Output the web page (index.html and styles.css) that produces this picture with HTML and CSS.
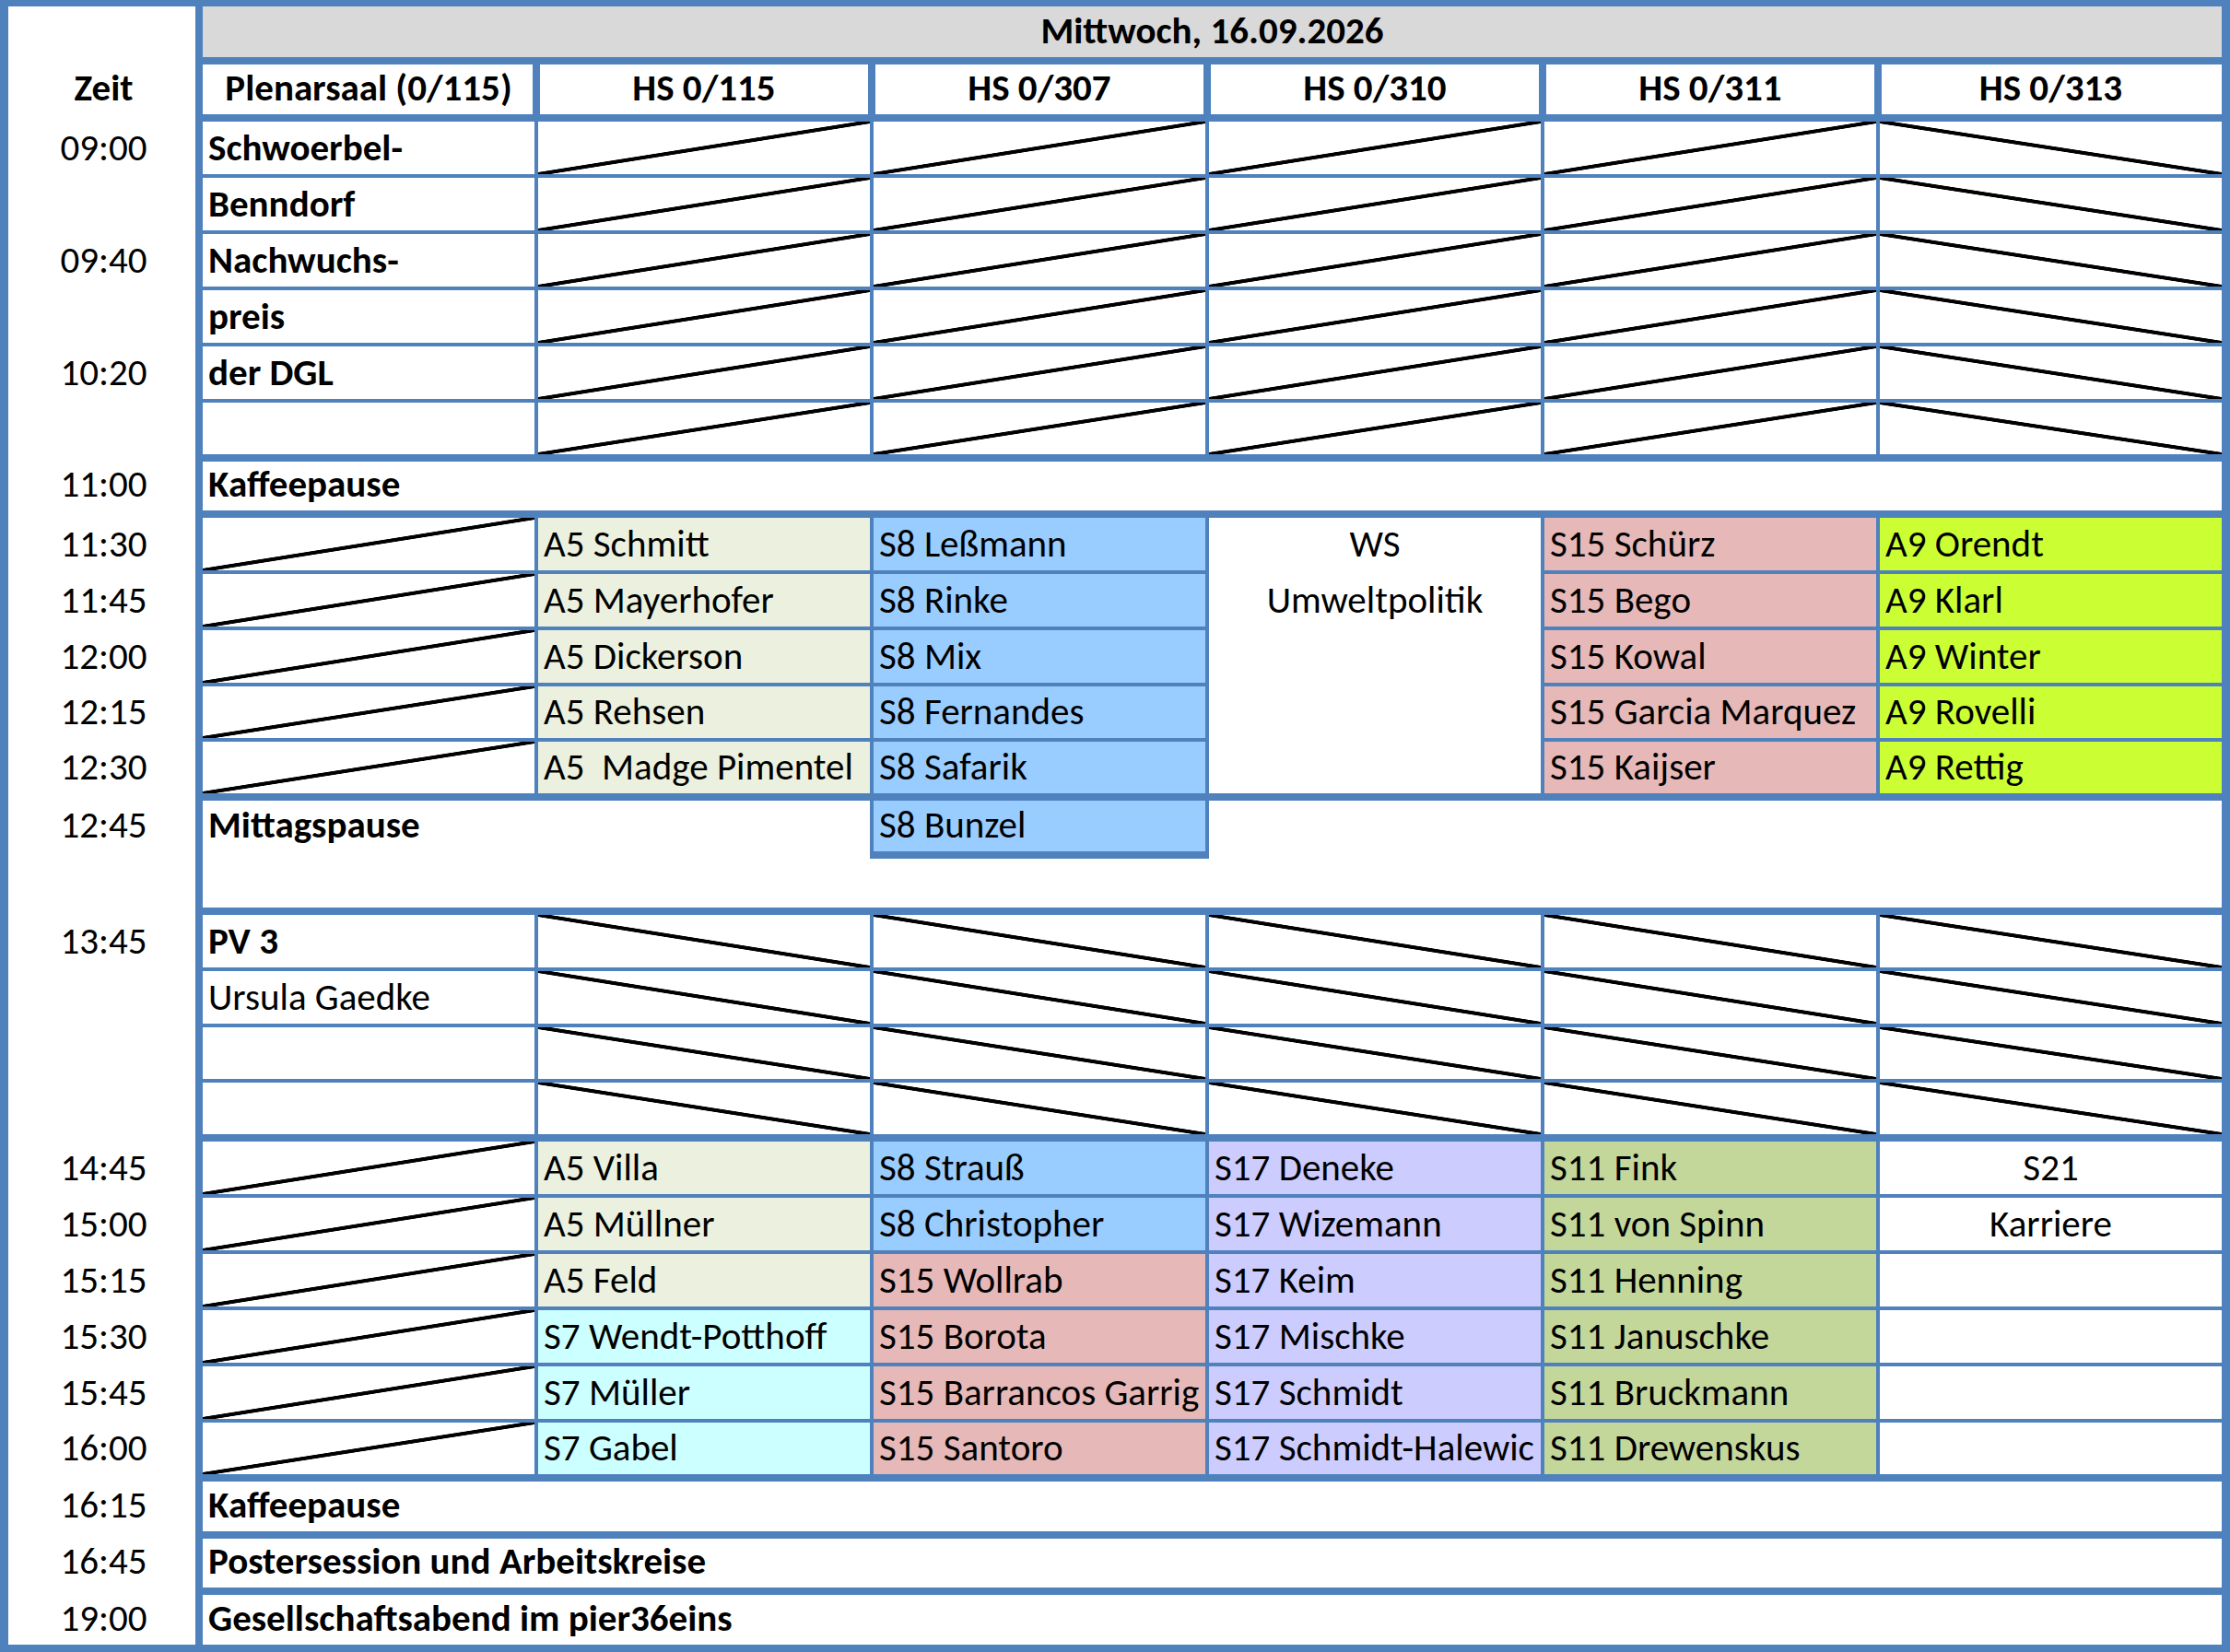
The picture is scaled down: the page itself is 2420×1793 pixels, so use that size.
FILE: index.html
```html
<!DOCTYPE html>
<html lang="de">
<head>
<meta charset="utf-8">
<title>Mittwoch, 16.09.2026</title>
<link rel="stylesheet" href="styles.css">
</head>
<body>
<div class="sheet">
  <div class="timecol">
    <div class="tband h-title"><div class="t"></div></div>
    <div class="tband h-head"><div class="t b">Zeit</div></div>
    <div class="tband rows6"><div class="t">09:00</div><div class="t"></div><div class="t">09:40</div><div class="t"></div><div class="t">10:20</div><div class="t"></div></div>
    <div class="tband h53"><div class="t">11:00</div></div>
    <div class="tband rows5"><div class="t">11:30</div><div class="t">11:45</div><div class="t">12:00</div><div class="t">12:15</div><div class="t">12:30</div></div>
    <div class="tband rowsm"><div class="t">12:45</div><div class="t"></div></div>
    <div class="tband rows4"><div class="t">13:45</div><div class="t"></div><div class="t"></div><div class="t"></div></div>
    <div class="tband rows6"><div class="t">14:45</div><div class="t">15:00</div><div class="t">15:15</div><div class="t">15:30</div><div class="t">15:45</div><div class="t">16:00</div></div>
    <div class="tband h54"><div class="t">16:15</div></div>
    <div class="tband h53"><div class="t">16:45</div></div>
    <div class="tband h54"><div class="t">19:00</div></div>
  </div>

  <div class="main">
    <div class="cell title b ctr">Mittwoch, 16.09.2026</div>

    <div class="band h-head">
      <div class="cell hd b ctr">Plenarsaal (0/115)</div>
      <div class="cell hd b ctr">HS 0/115</div>
      <div class="cell hd b ctr">HS 0/307</div>
      <div class="cell hd b ctr">HS 0/310</div>
      <div class="cell hd b ctr">HS 0/311</div>
      <div class="cell hd b ctr">HS 0/313</div>
    </div>

    <div class="band rows6">
      <div class="cell b">Schwoerbel-</div><div class="up"></div><div class="up"></div><div class="up"></div><div class="up"></div><div class="dn"></div>
      <div class="cell b">Benndorf</div><div class="up"></div><div class="up"></div><div class="up"></div><div class="up"></div><div class="dn"></div>
      <div class="cell b">Nachwuchs-</div><div class="up"></div><div class="up"></div><div class="up"></div><div class="up"></div><div class="dn"></div>
      <div class="cell b">preis</div><div class="up"></div><div class="up"></div><div class="up"></div><div class="up"></div><div class="dn"></div>
      <div class="cell b">der DGL</div><div class="up"></div><div class="up"></div><div class="up"></div><div class="up"></div><div class="dn"></div>
      <div class="cell"></div><div class="up"></div><div class="up"></div><div class="up"></div><div class="up"></div><div class="dn"></div>
    </div>

    <div class="cell b h53">Kaffeepause</div>

    <div class="band rows5">
      <div class="up"></div><div class="cell a5">A5 Schmitt</div><div class="cell s8">S8 Leßmann</div>
      <div class="ws"><div class="cell ctr">WS</div><div class="cell ctr">Umweltpolitik</div></div>
      <div class="cell s15">S15 Schürz</div><div class="cell a9">A9 Orendt</div>
      <div class="up"></div><div class="cell a5">A5 Mayerhofer</div><div class="cell s8">S8 Rinke</div><div class="cell s15">S15 Bego</div><div class="cell a9">A9 Klarl</div>
      <div class="up"></div><div class="cell a5">A5 Dickerson</div><div class="cell s8">S8 Mix</div><div class="cell s15">S15 Kowal</div><div class="cell a9">A9 Winter</div>
      <div class="up"></div><div class="cell a5">A5 Rehsen</div><div class="cell s8">S8 Fernandes</div><div class="cell s15">S15 Garcia Marquez</div><div class="cell a9">A9 Rovelli</div>
      <div class="up"></div><div class="cell a5">A5  Madge Pimentel</div><div class="cell s8">S8 Safarik</div><div class="cell s15">S15 Kaijser</div><div class="cell a9">A9 Rettig</div>
    </div>

    <div class="band rowsm">
      <div class="mittag"><div class="cell b mline">Mittagspause</div></div>
      <div class="cell s8 bunzel">S8 Bunzel</div>
    </div>

    <div class="band rows4">
      <div class="cell b">PV 3</div><div class="dn"></div><div class="dn"></div><div class="dn"></div><div class="dn"></div><div class="dn"></div>
      <div class="cell">Ursula Gaedke</div><div class="dn"></div><div class="dn"></div><div class="dn"></div><div class="dn"></div><div class="dn"></div>
      <div class="cell"></div><div class="dn"></div><div class="dn"></div><div class="dn"></div><div class="dn"></div><div class="dn"></div>
      <div class="cell"></div><div class="dn"></div><div class="dn"></div><div class="dn"></div><div class="dn"></div><div class="dn"></div>
    </div>

    <div class="band rows6">
      <div class="up"></div><div class="cell a5">A5 Villa</div><div class="cell s8">S8 Strauß</div><div class="cell s17">S17 Deneke</div><div class="cell s11">S11 Fink</div><div class="cell ctr">S21</div>
      <div class="up"></div><div class="cell a5">A5 Müllner</div><div class="cell s8">S8 Christopher</div><div class="cell s17">S17 Wizemann</div><div class="cell s11">S11 von Spinn</div><div class="cell ctr">Karriere</div>
      <div class="up"></div><div class="cell a5">A5 Feld</div><div class="cell s15">S15 Wollrab</div><div class="cell s17">S17 Keim</div><div class="cell s11">S11 Henning</div><div class="cell"></div>
      <div class="up"></div><div class="cell s7">S7 Wendt-Potthoff</div><div class="cell s15">S15 Borota</div><div class="cell s17">S17 Mischke</div><div class="cell s11">S11 Januschke</div><div class="cell"></div>
      <div class="up"></div><div class="cell s7">S7 Müller</div><div class="cell s15">S15 Barrancos Garrig</div><div class="cell s17">S17 Schmidt</div><div class="cell s11">S11 Bruckmann</div><div class="cell"></div>
      <div class="up"></div><div class="cell s7">S7 Gabel</div><div class="cell s15">S15 Santoro</div><div class="cell s17">S17 Schmidt-Halewic</div><div class="cell s11">S11 Drewenskus</div><div class="cell"></div>
    </div>

    <div class="cell b h54">Kaffeepause</div>
    <div class="cell b h53">Postersession und Arbeitskreise</div>
    <div class="cell b h54">Gesellschaftsabend im pier36eins</div>
  </div>
</div>
</body>
</html>
```

FILE: styles.css
```css
html, body {
  margin: 0;
  padding: 0;
  background: #ffffff;
}

.sheet {
  box-sizing: border-box;
  width: 2420px;
  height: 1793px;
  padding: 7px 9px 8px 9px;
  background: #4f81bd;
  display: flex;
  gap: 8px;
  font-family: "Carlito", "Lato", sans-serif;
  font-size: 41px;
  color: #000;
}

/* ---------- time column ---------- */
.timecol {
  width: 203px;
  flex: none;
  background: #ffffff;
  display: flex;
  flex-direction: column;
  gap: 8px;
}

.tband {
  display: grid;
  row-gap: 4px;
}

.t {
  display: flex;
  align-items: flex-end;
  justify-content: center;
  padding: 0 0 4px 4px;
  line-height: 1.2;
  white-space: nowrap;
}

/* ---------- main area ---------- */
.main {
  width: 2191px;
  display: flex;
  flex-direction: column;
  gap: 8px;
}

.band {
  display: grid;
  grid-template-columns: repeat(5, 360px) 371px;
  column-gap: 4px;
  row-gap: 4px;
}

/* row templates shared by time column and main area */
.h-title { height: 55px; grid-template-rows: 55px; }
.h-head  { grid-template-rows: 54px; }
.rows6   { grid-template-rows: 57px 57px 57px 57px 57px 56px; }
.rows5   { grid-template-rows: 57px 57px 57px 56px 56px; }
.rowsm   { grid-template-rows: 55px 53px; row-gap: 8px; }
.rows4   { grid-template-rows: 57px 57px 56px 56px; }
.h53     { height: 53px; flex: none; }
.h54     { height: 54px; flex: none; }
.tband.h53, .tband.h54 { grid-template-rows: 1fr; }

/* ---------- cells ---------- */
.cell {
  box-sizing: border-box;
  background: #ffffff;
  display: flex;
  align-items: flex-end;
  padding: 0 3px 4px 6px;
  line-height: 1.2;
  white-space: pre;
  overflow: hidden;
  min-width: 0;
}

.ctr { justify-content: center; padding-left: 3px; }
.b { font-weight: 700; }

.title {
  height: 55px;
  flex: none;
  background: #d9d9d9;
}

.hd {
  box-shadow: inset 2px 0 0 #4f81bd, inset -2px 0 0 #4f81bd;
}
.hd:first-child { box-shadow: inset -2px 0 0 #4f81bd; }
.hd:last-child { box-shadow: inset 2px 0 0 #4f81bd; }

/* diagonal "blocked" cells */
.up {
  background:
    linear-gradient(to bottom right,
      transparent calc(50% - 2.4px),
      #000 calc(50% - 1.7px),
      #000 calc(50% + 1.7px),
      transparent calc(50% + 2.4px)),
    #ffffff;
}
.dn {
  background:
    linear-gradient(to top right,
      transparent calc(50% - 2.4px),
      #000 calc(50% - 1.7px),
      #000 calc(50% + 1.7px),
      transparent calc(50% + 2.4px)),
    #ffffff;
}

/* merged workshop cell */
.ws {
  grid-row: span 5;
  background: #ffffff;
  display: grid;
  grid-template-rows: 57px 57px;
  row-gap: 4px;
  align-content: start;
}

/* lunch break: merged area with one session cell inside */
.mittag {
  grid-column: 1 / -1;
  grid-row: 1 / -1;
  background: #ffffff;
}
.mline { height: 55px; background: transparent; }
.bunzel {
  grid-column: 3;
  grid-row: 1;
  box-shadow: 0 4px 0 4px #4f81bd;
}

/* session colours */
.a5  { background: #ebf1de; }
.s8  { background: #99ccff; }
.s15 { background: #e6b8b7; }
.a9  { background: #ccff33; }
.s17 { background: #ccccff; }
.s11 { background: #c4d79b; }
.s7  { background: #ccffff; }
```
